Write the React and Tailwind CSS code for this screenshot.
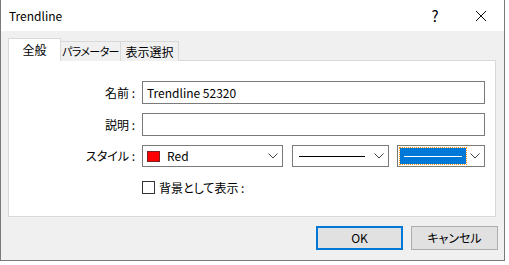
import React, { useState } from 'react';

const font = { fontFamily: '"Noto Sans CJK JP", "Noto Sans", sans-serif' };

function Chevron() {
  return (
    <svg width="10" height="6" viewBox="0 0 10 6" className="shrink-0">
      <path d="M0.5 0.5 L5 5 L9.5 0.5" fill="none" stroke="#444" strokeWidth="1" />
    </svg>
  );
}

export default function App() {
  const [tab, setTab] = useState('general');
  const [name, setName] = useState('Trendline 52320');
  const [desc, setDesc] = useState('');
  const [background, setBackground] = useState(false);

  const tabs = [
    { id: 'general', label: '全般', w: 'w-[53px]', t: '' },
    { id: 'params', label: 'パラメーター', w: 'w-[61px]', t: 'text-[11px] tracking-[-0.6px]' },
    { id: 'display', label: '表示選択', w: 'w-[59px]', t: '' },
  ];

  return (
    <div className="w-[509px] h-[265px] bg-white text-[12px] text-black [font-feature-settings:'palt']" style={font}>
      <div className="w-[505px] h-[261px] flex flex-col border-x border-b border-[#7a7a7a]">

        {/* Title bar */}
        <div className="h-[31px] bg-white flex items-center pl-[8px] shrink-0">
          <span className="leading-none">Trendline</span>
          <span className="ml-auto w-[46px] text-center text-[15px] leading-none">?</span>
          <span className="w-[46px] flex justify-center">
            <svg width="12" height="12" viewBox="0 0 12 12">
              <path d="M1 1 L11 11 M11 1 L1 11" stroke="#111" strokeWidth="1" />
            </svg>
          </span>
        </div>

        {/* Body */}
        <div className="flex-1 bg-[#f0f0f0] pl-[7px] pr-[6px] pt-[8px] flex flex-col">

          {/* Tabs */}
          <div className="flex items-end h-[22px] relative z-10 -mb-px">
            {tabs.map((t) =>
              tab === t.id ? (
                <button
                  key={t.id}
                  onClick={() => setTab(t.id)}
                  className={`${t.w} ${t.t} h-[23px] bg-white border border-b-0 border-[#d9d9d9] flex items-center justify-center leading-none whitespace-nowrap`}
                >
                  {t.label}
                </button>
              ) : (
                <button
                  key={t.id}
                  onClick={() => setTab(t.id)}
                  className={`${t.w} ${t.t} h-[20px] -ml-px bg-[#f0f0f0] border border-b-0 border-[#d9d9d9] flex items-center justify-center leading-none whitespace-nowrap`}
                >
                  {t.label}
                </button>
              )
            )}
          </div>

          {/* Panel */}
          <div className="w-[488px] h-[157px] bg-white border border-[#d9d9d9] pt-[20px]">
            <div className="grid grid-cols-[127px_343px] gap-x-[6px] gap-y-[9px] items-center">
              <span className="text-right pr-[1px] leading-none">名前 :</span>
              <input
                value={name}
                onChange={(e) => setName(e.target.value)}
                className="h-[23px] border border-[#7a7a7a] px-[4px] outline-none bg-white leading-none"
              />

              <span className="text-right pr-[1px] leading-none">説明 :</span>
              <input
                value={desc}
                onChange={(e) => setDesc(e.target.value)}
                className="h-[23px] border border-[#7a7a7a] px-[4px] outline-none bg-white"
              />

              <span className="text-right pr-[1px] leading-none">スタイル :</span>
              <div className="flex gap-[9px]">
                <div className="w-[141px] h-[22px] border border-[#7a7a7a] flex items-center pl-[4px] pr-[4px]">
                  <span className="w-[13px] h-[11px] bg-[#ff0000] border border-[#7a2020]" />
                  <span className="ml-[7px] leading-none">Red</span>
                  <span className="ml-auto"><Chevron /></span>
                </div>
                <div className="w-[97px] h-[22px] border border-[#7a7a7a] flex items-center pl-[6px] pr-[4px]">
                  <span className="w-[66px] h-px bg-black" />
                  <span className="ml-auto"><Chevron /></span>
                </div>
                <div className="w-[88px] h-[22px] -ml-px border border-[#7a7a7a] flex items-center pl-[2px] pr-[4px]">
                  <div className="w-[66px] h-[16px] bg-[#0078d7] outline-1 outline-dotted outline-[#ff8c00] flex items-center justify-center">
                    <span className="w-[58px] h-px bg-white" />
                  </div>
                  <span className="ml-auto"><Chevron /></span>
                </div>
              </div>

              <span />
              <label className="flex items-center gap-[4px] mt-[5px] cursor-pointer">
                <input
                  type="checkbox"
                  checked={background}
                  onChange={(e) => setBackground(e.target.checked)}
                  className="appearance-none w-[13px] h-[13px] border border-[#333] bg-white checked:bg-[#0078d7]"
                />
                <span className="leading-none">背景として表示 :</span>
              </label>
            </div>
          </div>

          {/* Buttons */}
          <div className="flex justify-end gap-[8px] mt-[9px]">
            <button className="w-[87px] h-[24px] bg-[#e1e1e1] border-2 border-[#0078d7] leading-none">OK</button>
            <button className="w-[87px] h-[24px] bg-[#e1e1e1] border border-[#adadad] leading-none">キャンセル</button>
          </div>
        </div>
      </div>
    </div>
  );
}
